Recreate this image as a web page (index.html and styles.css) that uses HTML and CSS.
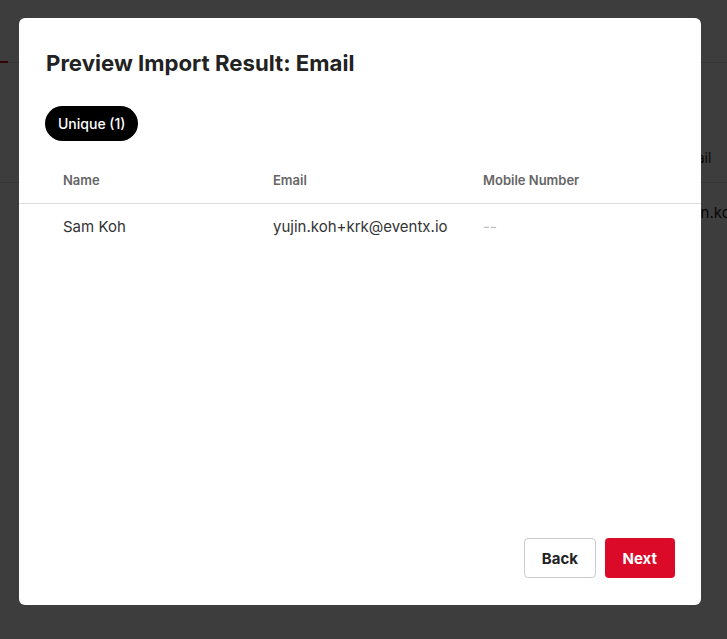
FILE: index.html
```html
<!DOCTYPE html>
<html lang="en">
<head>
    <meta charset="UTF-8">
    <meta name="viewport" content="width=device-width, initial-scale=1.0">
    <title>Preview Import Result</title>
    <link rel="stylesheet" href="styles.css">
</head>
<body>
<div class="page">
    <div class="tabs">
        <div class="tab active"></div>
    </div>
    <div class="list">
        <div class="list-head">
            <span class="cell">Name</span>
            <span class="cell">Email</span>
        </div>
        <div class="list-row">
            <span class="cell">Sam Koh</span>
            <span class="cell">yujin.koh+krk@eventx.io</span>
        </div>
    </div>
</div>

<div class="overlay">
    <div class="modal">
        <h2 class="modal-title">Preview Import Result: Email</h2>
        <div class="chips">
            <button class="chip">Unique (1)</button>
        </div>
        <table class="preview">
            <thead>
            <tr>
                <th>Name</th>
                <th>Email</th>
                <th>Mobile Number</th>
            </tr>
            </thead>
            <tbody>
            <tr>
                <td>Sam Koh</td>
                <td>yujin.koh+krk@eventx.io</td>
                <td class="empty">--</td>
            </tr>
            </tbody>
        </table>
        <div class="modal-footer">
            <button class="btn btn-back">Back</button>
            <button class="btn btn-next">Next</button>
        </div>
    </div>
</div>
</body>
</html>
```

FILE: styles.css
```css
body {
    margin: 0;
    font-family: Inter, "Noto Sans", sans-serif;
    background: #fff;
    color: #222;
}
.page {
    height: 639px;
    overflow: hidden;
}
.tabs {
    height: 62px;
    border-bottom: 1px solid #ddd;
    display: flex;
    align-items: flex-end;
}
.tab.active {
    width: 8px;
    height: 2px;
    background: #d0021b;
    margin-bottom: -1px;
}
.list-head,
.list-row {
    display: flex;
    white-space: nowrap;
    padding-left: 676px;
}
.list-head {
    height: 120px;
    align-items: flex-end;
    padding-bottom: 16px;
    box-sizing: border-box;
    border-bottom: 1px solid #ddd;
    font-size: 14px;
}
.list-head .cell:first-child,
.list-row .cell:first-child {
    display: none;
}
.list-row {
    padding-top: 20px;
    font-size: 15px;
    width: 727px;
    box-sizing: border-box;
    overflow: hidden;
}

.overlay {
    position: fixed;
    inset: 0;
    background: rgba(0, 0, 0, 0.76);
}
.modal {
    position: absolute;
    left: 19px;
    top: 18px;
    width: 682px;
    height: 587px;
    background: #fff;
    border-radius: 6px;
    box-sizing: border-box;
    padding: 31px 26px 27px;
    display: flex;
    flex-direction: column;
}
.modal-title {
    margin: 0 0 0 1px;
    font-size: 22.2px;
    font-weight: 700;
    line-height: 28px;
    color: #222;
}
.chips {
    margin-top: 29px;
    display: flex;
}
.chip {
    height: 35px;
    padding: 0 13px;
    border: none;
    border-radius: 18px;
    background: #000;
    color: #fff;
    font-family: inherit;
    font-size: 14px;
    font-weight: 500;
}
.preview {
    margin: 16px -26px 0;
    border-collapse: collapse;
    width: calc(100% + 52px);
    table-layout: fixed;
}
.preview th,
.preview td {
    padding: 0;
}
.preview th:first-child,
.preview td:first-child {
    padding-left: 44px;
    width: 210px;
}
.preview th:nth-child(2),
.preview td:nth-child(2) {
    width: 210px;
}
.preview th {
    text-align: left;
    font-size: 13px;
    font-weight: 600;
    color: #666;
    height: 46px;
    border-bottom: 1px solid #ddd;
}
.preview td {
    font-size: 15px;
    color: #333;
    height: 44px;
}
.preview td.empty {
    color: #bbb;
}
.modal-footer {
    margin-top: auto;
    display: flex;
    justify-content: flex-end;
    gap: 9px;
}
.btn {
    height: 40px;
    border-radius: 4px;
    font-family: inherit;
    font-size: 15px;
    font-weight: 700;
    cursor: pointer;
}
.btn-back {
    padding: 0 16.5px;
    background: #fff;
    color: #222;
    border: 1px solid #ccc;
}
.btn-next {
    padding: 0 18px;
    background: #da0a28;
    color: #fff;
    border: none;
}
```
